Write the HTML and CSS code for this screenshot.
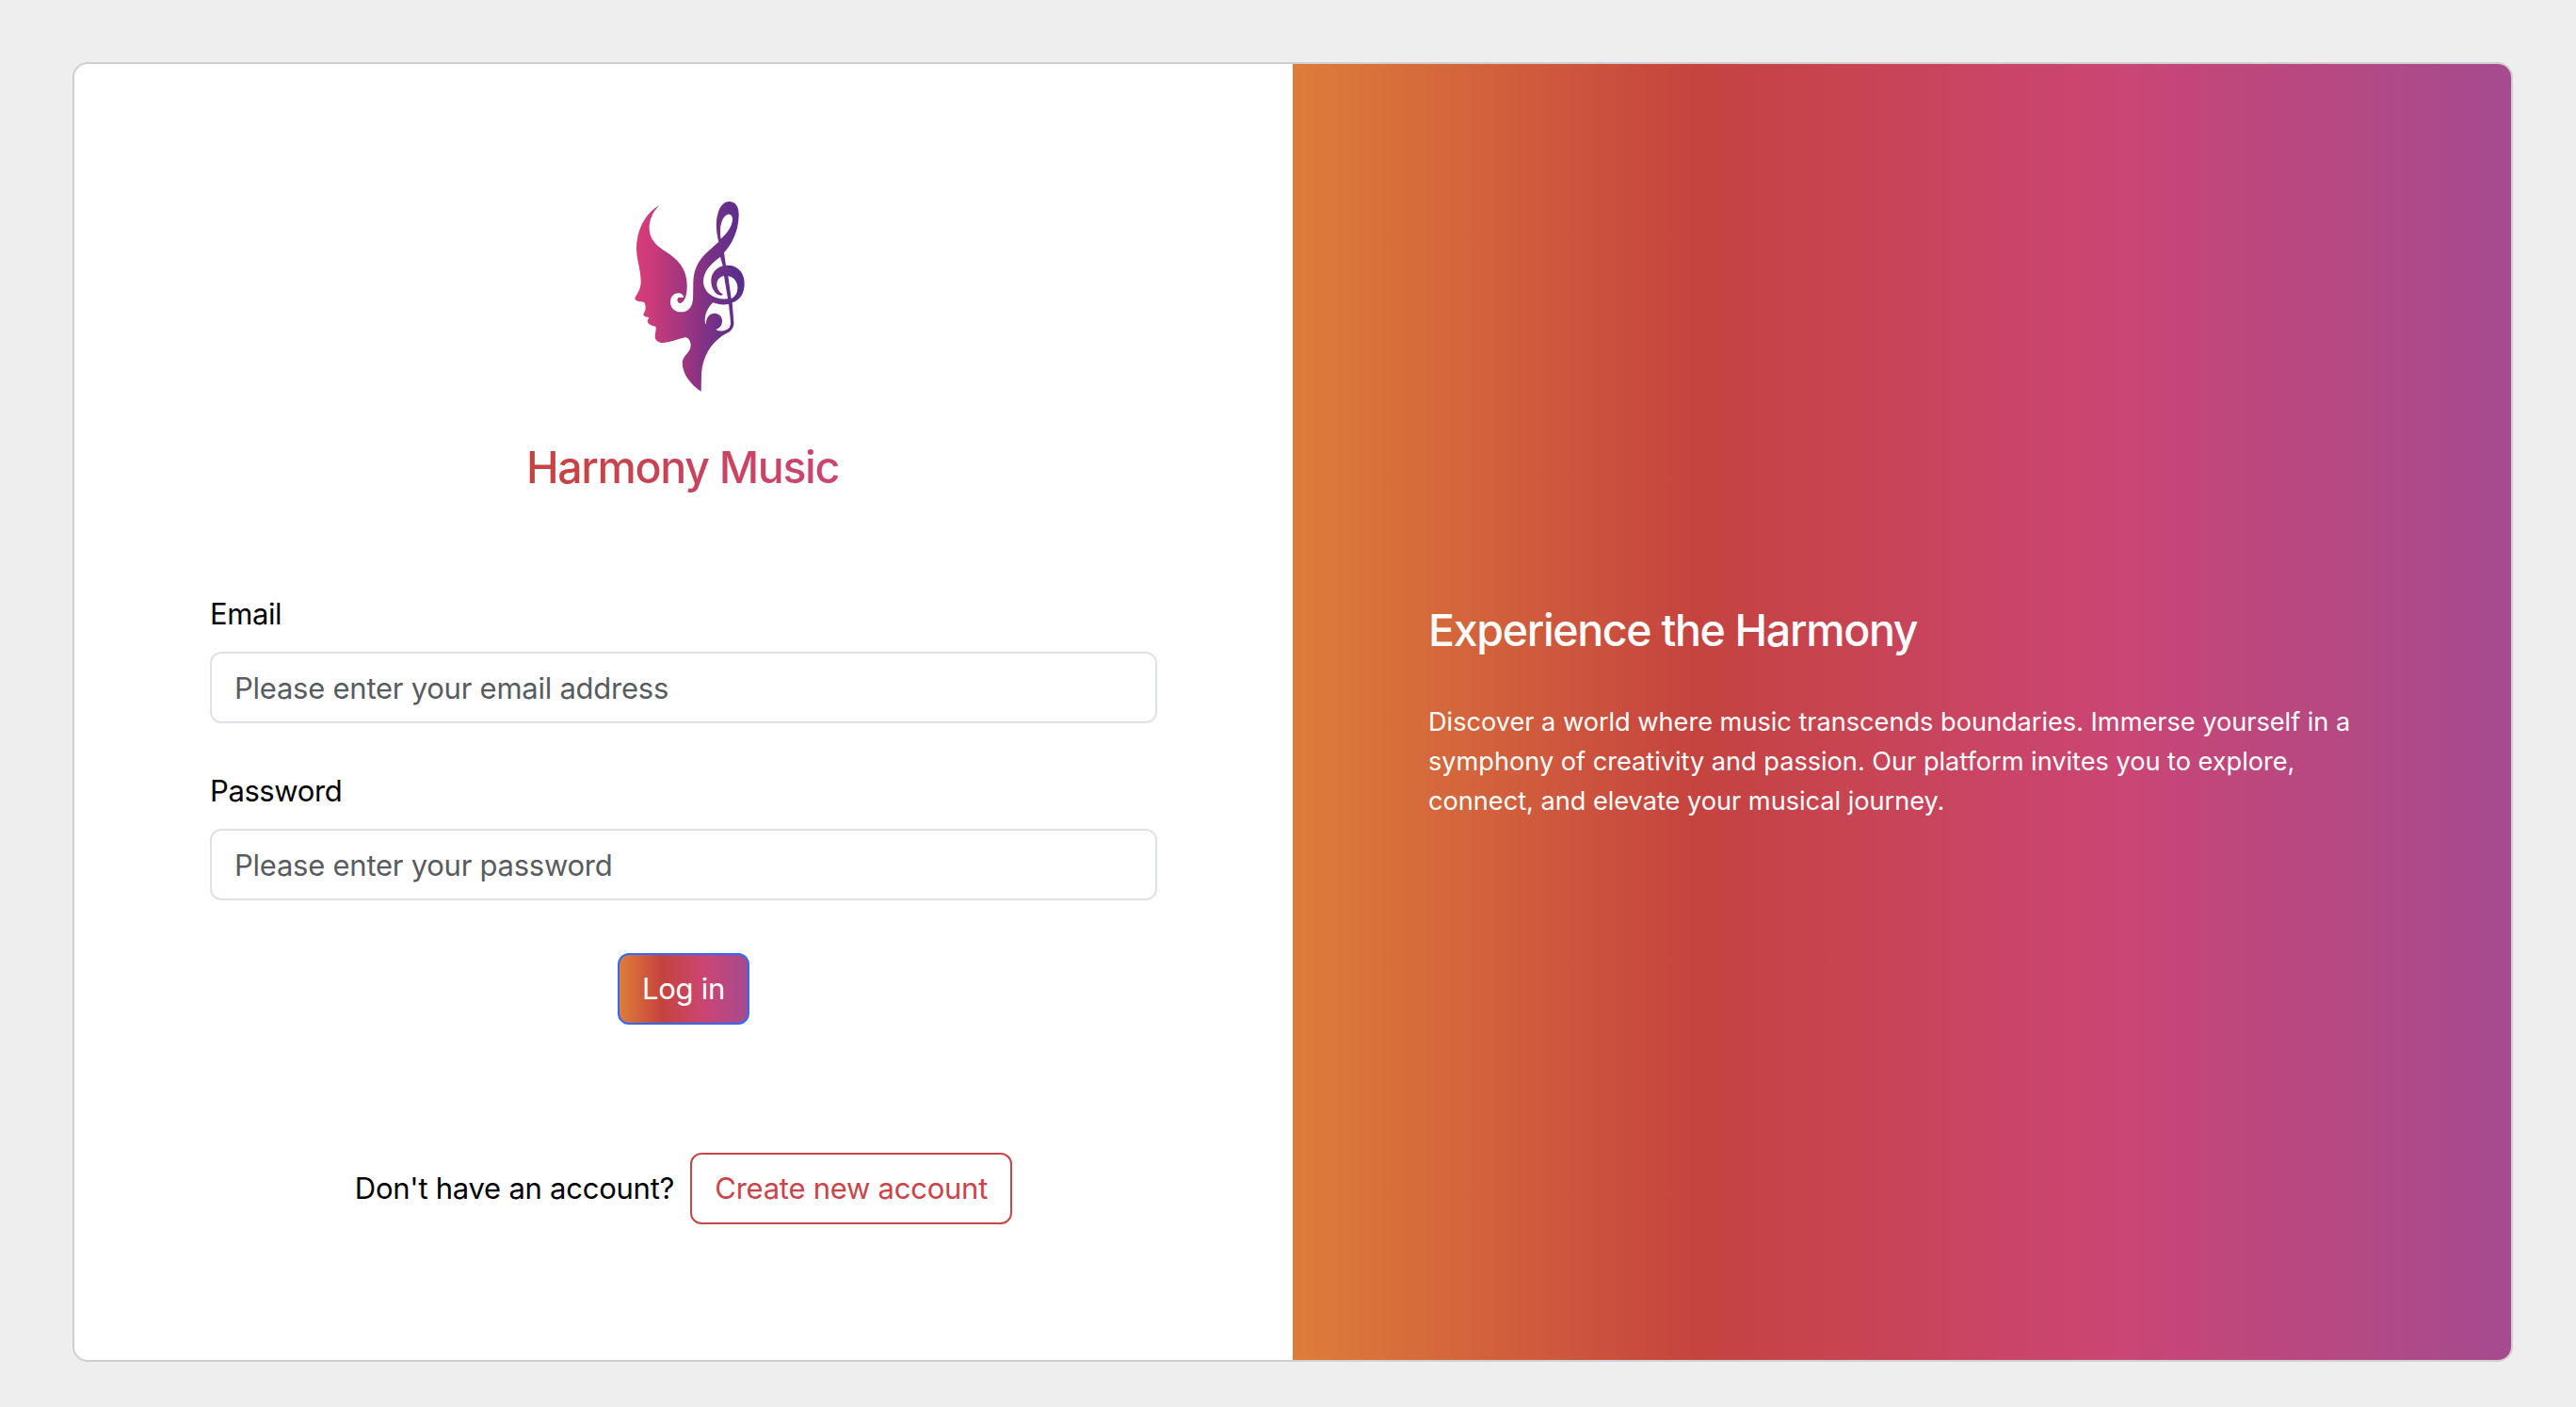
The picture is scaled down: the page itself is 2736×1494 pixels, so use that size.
FILE: index.html
```html
<!DOCTYPE html>
<html lang="en">
<head>
<meta charset="utf-8">
<title>Harmony Music</title>
<link rel="stylesheet" href="styles.css">
</head>
<body>
<main class="card">
  <section class="login">
    <svg class="logo" viewBox="0 36 456 654" role="img" aria-label="Harmony Music logo">
      <defs>
        <linearGradient id="logo-fill" gradientUnits="userSpaceOnUse" x1="72" y1="0" x2="422" y2="0">
          <stop offset="0" stop-color="#d93d79"/>
          <stop offset="0.15" stop-color="#cc3b7a"/>
          <stop offset="0.45" stop-color="#a03580"/>
          <stop offset="0.7" stop-color="#773187"/>
          <stop offset="1" stop-color="#552d8e"/>
        </linearGradient>
      </defs>
      <path fill="url(#logo-fill)" fill-rule="evenodd" d="M151 54C126 78 114 112 121 143C129 180 165 196 188 213C222 238 240 270 239 312C239 324 238 332 236 340C233 354 226 365 217 366C209 366 205 354 211 349C217 345 224 349 229 348C228 340 220 334 211 334C197 334 186 346 186 362C186 381 201 394 220 394C243 394 257 378 258 350C260 310 256 285 266 258C280 215 315 195 340 170C332 140 328 105 340 72C348 50 362 41 376 42C396 44 405 62 404 88C403 130 388 170 357 205L363 246C398 242 422 268 422 302C422 335 408 356 383 364L388 425C390 442 380 456 365 462C330 480 290 520 285 590L284 647C250 625 224 590 224 555C226 530 250 525 251 500C250 485 243 474 233 475C210 480 180 493 158 492C145 490 136 482 137 470C138 458 142 446 139 440C128 438 113 432 113 422C115 416 119 414 117 411C110 410 100 408 100 402C102 396 108 388 107 378C106 368 104 362 100 362C88 361 72 358 73 350C78 338 91 325 92 300C93 260 78 230 78 190C78 130 110 75 151 54Z
        M347 161C342 135 346 100 362 87C374 77 384 84 384 98C384 120 365 145 347 161Z
        M345 218L353 247C328 254 315 275 316 297C317 322 332 341 347 341C352 341 354 338 352 336C338 330 330 310 336 295C340 286 348 280 357 278L369 352C330 356 292 335 291 297C291 265 315 240 345 218Z
        M370 279C388 283 400 297 400 316C400 334 392 346 380 351Z
        M322 364C306 378 296 400 296 420C296 427 298 432 300 433C299 412 311 398 326 398C342 398 352 410 351 424C350 438 343 446 331 449C340 458 365 455 373 445C380 437 378 425 376 405L372 369C355 372 338 370 322 364Z"/>
    </svg>
    <h1 class="brand">Harmony Music</h1>
    <form class="form">
      <div class="field">
        <label class="label" for="email">Email</label>
        <input class="input" id="email" type="email" placeholder="Please enter your email address">
      </div>
      <div class="field">
        <label class="label" for="password">Password</label>
        <input class="input" id="password" type="password" placeholder="Please enter your password">
      </div>
      <button class="btn btn-login" type="button">Log in</button>
    </form>
    <div class="signup">
      <span class="question">Don't have an account?</span>
      <button class="btn btn-create" type="button">Create new account</button>
    </div>
  </section>
  <section class="promo">
    <h2 class="promo-title">Experience the Harmony</h2>
    <p class="promo-text">Discover a world where music transcends boundaries. Immerse yourself in a symphony of creativity and passion. Our platform invites you to explore, connect, and elevate your musical journey.</p>
  </section>
</main>
</body>
</html>
```
FILE: styles.css
```css
:root {
  --brand-gradient: linear-gradient(to right, #de7d39, #c5433f, #cb4573, #a54b8f);
}

* {
  box-sizing: border-box;
}

body {
  margin: 0;
  min-height: 1494px;
  padding: 66px 67px 48px 77px;
  display: flex;
  background: #eee;
  color: #000;
  font-family: Inter, "Liberation Sans", sans-serif;
  font-size: 31px;
  line-height: 48px;
  letter-spacing: -0.25px;
}

.card {
  flex: 1;
  display: grid;
  grid-template-columns: 1fr 1fr;
  border: 2px solid #cfcfcf;
  border-radius: 16px;
  background: #fff;
  overflow: hidden;
}

.login {
  display: flex;
  flex-direction: column;
  align-items: center;
  padding: 144px;
}

.logo {
  display: block;
  width: 152px;
  height: 218px;
}

.brand,
.promo-title {
  font-size: 46.5px;
  font-weight: 500;
  line-height: 58px;
  letter-spacing: -1.34px;
}

.brand {
  align-self: stretch;
  margin: 37px 0 103px;
  padding-right: 2px;
  text-align: center;
  background: var(--brand-gradient);
  background-clip: text;
  -webkit-background-clip: text;
  color: transparent;
}

.form {
  align-self: stretch;
  display: flex;
  flex-direction: column;
  align-items: center;
}

.field {
  align-self: stretch;
  margin-bottom: 48px;
}

.label {
  display: block;
  margin-bottom: 16px;
  letter-spacing: -0.4px;
}

.input {
  display: block;
  width: 100%;
  height: 76px;
  padding: 12px 24px;
  border: 2px solid #dee2e6;
  border-radius: 12px;
  background: #fff;
  font: inherit;
  letter-spacing: inherit;
  outline: none;
}

.input::placeholder {
  color: #595c5f;
  opacity: 1;
}

.btn {
  height: 76px;
  padding: 12px 24px;
  border: 2px solid;
  border-radius: 12px;
  font: inherit;
  letter-spacing: inherit;
  white-space: nowrap;
}

.btn-login {
  width: 140px;
  margin-top: 8px;
  border-color: #2f6bff;
  background: var(--brand-gradient);
  color: #fff;
}

.signup {
  display: flex;
  align-items: center;
  gap: 17px;
  margin-top: 136px;
}

.btn-create {
  width: 342px;
  border-color: #cb444a;
  background: transparent;
  color: #cb444a;
}

.promo {
  display: flex;
  flex-direction: column;
  justify-content: center;
  padding: 0 144px;
  background: var(--brand-gradient);
  color: #fff;
}

.promo-title {
  margin: 0 0 48px;
}

.promo-text {
  margin: 0;
  font-size: 27.2px;
  line-height: 42px;
  letter-spacing: -0.03px;
}
```
